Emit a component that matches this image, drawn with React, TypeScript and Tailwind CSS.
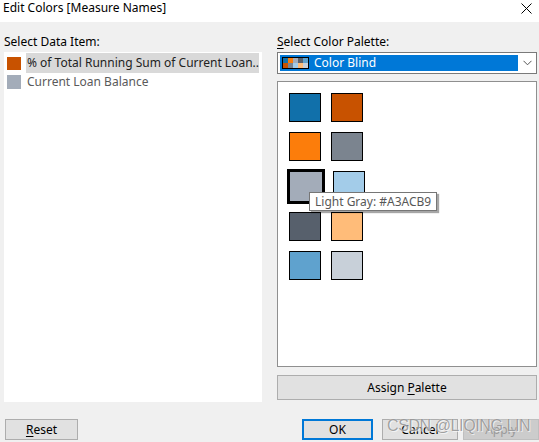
import React from "react";

const font = { fontFamily: '"Noto Sans", "Open Sans", sans-serif' };

const grid: { c: string; sel?: boolean }[][] = [
  [{ c: "#1170aa" }, { c: "#c85200" }],
  [{ c: "#fc7d0b" }, { c: "#7b848f" }],
  [{ c: "#a3acb9", sel: true }, { c: "#a3cce9" }],
  [{ c: "#57606c" }, { c: "#ffbc79" }],
  [{ c: "#5fa2ce" }, { c: "#c8d0d9" }],
];

const iconTop = ["#1170aa", "#fc7d0b", "#a3acb9", "#57606c", "#5fa2ce"];
const iconBot = ["#c85200", "#7b848f", "#a3cce9", "#ffbc79", "#c8d0d9"];

export default function App() {
  return (
    <div
      className="relative w-[539px] h-[442px] bg-[#f0f0f0] flex flex-col overflow-hidden text-[12px] text-black"
      style={font}
    >
      {/* title bar */}
      <div className="h-[22px] bg-white flex items-center justify-between pl-[3px] pr-[7px]">
        <span className="text-[12px] leading-none -mt-[6px]">Edit Colors [Measure Names]</span>
        <svg width="11" height="11" viewBox="0 0 11 11" className="-mt-[6px]">
          <path d="M0.5 0.5 L10.5 10.5 M10.5 0.5 L0.5 10.5" stroke="#000" strokeWidth="1" />
        </svg>
      </div>

      {/* body */}
      <div className="flex pt-[12px] pl-[4px] gap-[15px]">
        {/* left */}
        <div className="w-[258px] flex flex-col">
          <div className="h-[18px] leading-[16px]">Select Data Item:</div>
          <div className="h-[350px] bg-white pt-[1px] pl-[3px] pr-[3px]">
            <div className="flex items-center h-[20px]">
              <div className="w-[14px] h-[13px] bg-[#c85200] mr-[5px]" />
              <div className="flex-1 h-[20px] bg-[#d9d9d9] flex items-center pl-[1px] text-[#222] whitespace-nowrap overflow-hidden">
                % of Total Running Sum of Current Loan..
              </div>
            </div>
            <div className="flex items-center h-[16px] mt-[1px]">
              <div className="w-[14px] h-[14px] bg-[#a3acb9] mr-[5px]" />
              <div className="pl-[1px] text-[#5a5a5a] whitespace-nowrap">Current Loan Balance</div>
            </div>
          </div>
        </div>

        {/* right */}
        <div className="w-[260px] flex flex-col">
          <div className="h-[18px] leading-[16px]">
            <span className="underline underline-offset-2">S</span>elect Color Palette:
          </div>
          <div className="h-[22px] border border-[#7a7a7a] bg-white flex items-center pl-[2px]">
            <div className="w-[238px] h-[16px] bg-[#0078d7] flex items-center pl-[2px] text-white">
              <div className="flex flex-col border border-black w-[27px] h-[12px]">
                <div className="flex h-[5px]">
                  {iconTop.map((c) => (
                    <div key={c} className="flex-1" style={{ background: c }} />
                  ))}
                </div>
                <div className="flex flex-1">
                  {iconBot.map((c) => (
                    <div key={c} className="flex-1" style={{ background: c }} />
                  ))}
                </div>
              </div>
              <span className="ml-[5px]">Color Blind</span>
            </div>
            <div className="flex-1 flex justify-center">
              <svg width="9" height="6" viewBox="0 0 9 6">
                <path d="M0.5 0.8 L4.5 4.8 L8.5 0.8" stroke="#555" strokeWidth="1" fill="none" />
              </svg>
            </div>
          </div>
          <div className="relative mt-[7px] h-[286px] bg-white border border-[#8f8f8f] pt-[11px] pl-[11px]">
            <div className="flex flex-col gap-[10px]">
              {grid.map((row, i) => (
                <div key={i} className="flex gap-[10px]">
                  {row.map((s) => (
                    <div
                      key={s.c}
                      className={
                        s.sel
                          ? "w-[32px] h-[29px] border-[3px] border-black -m-[2px] box-content"
                          : "w-[32px] h-[29px] border border-black"
                      }
                      style={{ background: s.c }}
                    />
                  ))}
                </div>
              ))}
            </div>
            {/* tooltip */}
            <div className="absolute left-[31px] top-[110px] h-[19px] px-[5px] bg-white border border-[#767676] flex items-center text-[#575757] shadow-[2px_2px_1px_rgba(0,0,0,0.35)] whitespace-nowrap">
              Light Gray: #A3ACB9
            </div>
          </div>
          <div className="mt-[8px] h-[25px] bg-[#e1e1e1] border border-[#adadad] flex items-center justify-center">
            Assign <span className="ml-[3px] underline underline-offset-2">P</span>alette
          </div>
        </div>
      </div>

      {/* bottom buttons */}
      <div className="flex mt-[17px] h-[21px]">
        <div className="ml-[5px] w-[73px] bg-[#e1e1e1] border border-[#adadad] flex items-center justify-center">
          <span className="underline underline-offset-2">R</span>eset
        </div>
        <div className="ml-[224px] w-[71px] bg-[#e1e1e1] border-2 border-[#0078d7] flex items-center justify-center">
          OK
        </div>
        <div className="ml-[9px] w-[76px] bg-[#e1e1e1] border border-[#adadad] flex items-center justify-center">
          Cancel
        </div>
        <div className="ml-[5px] w-[76px] bg-[#cccccc] border border-[#bfbfbf] flex items-center justify-center text-[#9a9a9a]">
          Apply
        </div>
      </div>

      {/* watermark */}
      <div
        className="absolute left-[387px] top-[418px] text-[16px] leading-none tracking-[-0.4px] text-[rgba(100,100,100,0.6)] whitespace-nowrap"
        style={{
          textShadow: "0 0 1px rgba(255,255,255,0.9), 1px 1px 0 rgba(255,255,255,0.6)",
          fontFamily: '"Liberation Sans", sans-serif',
        }}
      >
        CSDN @LIQING LIN
      </div>
    </div>
  );
}
